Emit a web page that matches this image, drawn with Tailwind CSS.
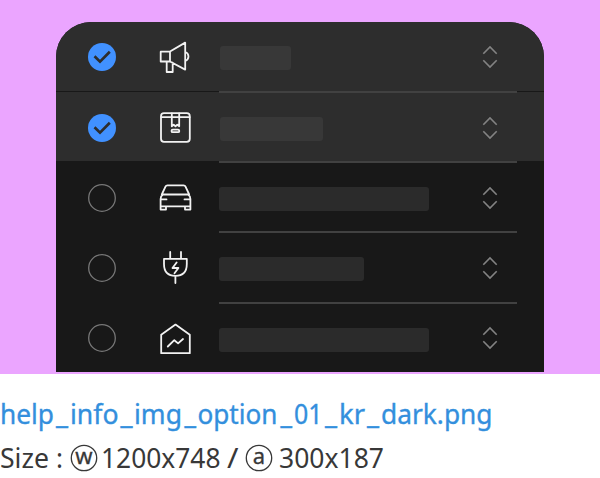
<!DOCTYPE html>
<html lang="en">
<head>
<meta charset="utf-8">
<title>Option list</title>
<script src="https://cdn.jsdelivr.net/npm/@tailwindcss/browser@4"></script>
</head>
<body class="w-[600px] h-[478px] overflow-hidden bg-white font-['Noto_Sans',sans-serif]">
<main class="h-[374px] bg-[#eba5ff] pt-[22px] px-[56px]">
  <ul id="list" class="h-[349.6px] overflow-hidden rounded-t-[35px] bg-[#181818]"></ul>
</main>
<footer>
  <svg class="block h-[104px] w-[600px] text-[27.5px]" viewBox="0 0 600 104">
    <text id="name" y="50" fill="#338fdd" stroke="#338fdd" stroke-width="0.35"></text>
    <text id="size" y="93.5" fill="#383838"></text>
    <g fill="none" stroke="#383838" stroke-width="1.3"><circle cx="84" cy="84" r="12.7"/><circle cx="259" cy="84" r="12.7"/></g>
    <g class="text-[22px]" fill="#383838" stroke="#383838" stroke-width="0.3" text-anchor="middle"><text x="84" y="89.7">w</text><text x="259" y="89.7">a</text></g>
  </svg>
</footer>
<script>
const icons = [
  '<path d="M10.7 21.7H20V31.5H10.7ZM20 21.5 35.2 12.6V39.6L20 31.5M35.2 22A4.6 4.6 0 0 1 35.2 30.8M16.7 31.5V42H22.7V32.7"/>',
  '<rect x="11" y="11.2" width="28.8" height="28.6" rx="3"/><path d="M11.4 15.2H39.6M21.8 11.4V24.3L23.7 22.8 25.5 24.3 27.3 22.8 29.2 24.3V11.4"/><rect x="21.5" y="27.6" width="7.8" height="2.6" rx="1.3"/>',
  '<path d="M11.8 22.5 15.6 14.4Q16.1 13.3 17.4 13.3H33.6Q34.9 13.3 35.4 14.4L39.2 22.5M13 22.5H38Q40.4 24 40.4 27V37.6H35V34.3H16V37.6H10.6V27Q10.6 24 13 22.5ZM10.8 27.4H16.5M34.5 27.4H40.2M10.8 34.3H16M35 34.3H40.2"/>',
  '<path d="M14 16.8H36.8V22Q36.8 33.8 25.4 33.8 14 33.8 14 22ZM20.2 10V16.8M31 10V16.8M25.4 34V41M26.6 20.5 22.5 26H28.4L24.5 31.2"/>',
  '<path d="M11.2 21.8 25.5 11.6 39.8 21.8V40.2H11.2ZM17.8 33.5 24.3 27.2 28.1 30.4 33 26"/>'
];
const bars = [['w-[71px]', 'ml-[1px]'], ['w-[103px]', 'ml-[1px]'], ['w-[210px]', ''], ['w-[145px]', ''], ['w-[210px]', '']];
document.getElementById('list').innerHTML = icons.map((icon, i) => {
  const on = i < 2;
  const check = on
    ? '<circle cx="14" cy="14" r="14" fill="#4191ff"/><path d="M6.5 13.3 12 18.7 21.8 8.7" fill="none" stroke="#2d2d2d" stroke-width="2.7"/>'
    : '<circle cx="14" cy="14" r="13.3" fill="none" stroke="#777" stroke-width="1.3"/>';
  return `<li class="flex items-center ${i === 0 ? 'h-[69px]' : 'h-[70.2px]'} ${on ? 'bg-[#2d2d2d]' : ''} ${i === 1 ? 'border-t border-[#181818]' : ''}">
    <svg class="ml-[32px] size-[28px] shrink-0 ${i === 0 ? 'mt-[1px]' : 'mt-[3px]'}" viewBox="0 0 28 28">${check}</svg>
    <svg class="ml-[34px] size-[50px] shrink-0 ${i === 0 ? '-mt-[3px]' : i === 1 ? 'mt-[1px]' : 'mt-[2px]'}" viewBox="0 0 50 50" fill="none" stroke="#f2f2f2" stroke-width="1.8" stroke-linejoin="round" stroke-linecap="round">${icon}</svg>
    <div class="ml-[18.5px] flex w-[298.5px] items-center self-stretch ${i > 0 ? 'pt-[4px] border-t-[2px] border-[#414141]' : 'pt-[3px]'} ${i === 1 ? '-mt-px' : ''}">
      <span class="h-[24px] rounded-[3px] ${on ? 'bg-[#383838]' : 'bg-[#2b2b2b]'} ${bars[i].join(' ')}"></span>
      <svg class="-mt-[3px] ml-auto mr-[19px] h-[24px] w-[16px]" viewBox="0 0 16 24" fill="none" stroke="#838383" stroke-width="1.6"><path d="M1.3 8.8 8 2 14.7 8.8M1.3 15.2 8 22 14.7 15.2"/></svg>
    </div>
  </li>`;
}).join('');
// Each run is [text, left edge, width].
const runs = {
  name: [['help', 0, 54], ['_', 56, 12], ['info', 70, 48.5], ['_', 120.5, 12], ['img', 134, 48], ['_', 184.5, 11.5], ['option', 197.5, 80], ['_', 280.5, 11.5], ['01', 294, 28.5], ['_', 325, 12], ['kr', 339, 26], ['_', 367, 12], ['dark.png', 381, 111.5]],
  size: [['Size', 0, 49], [':', 56, 7], ['1200x748', 101, 119.5], ['/', 227, 11.5], ['300x187', 279, 105]]
};
for (const id in runs) {
  document.getElementById(id).innerHTML = runs[id].map(([t, x, w]) =>
    `<tspan x="${x}" textLength="${w}" lengthAdjust="spacingAndGlyphs">${t}</tspan>`).join('');
}
</script>
</body>
</html>
